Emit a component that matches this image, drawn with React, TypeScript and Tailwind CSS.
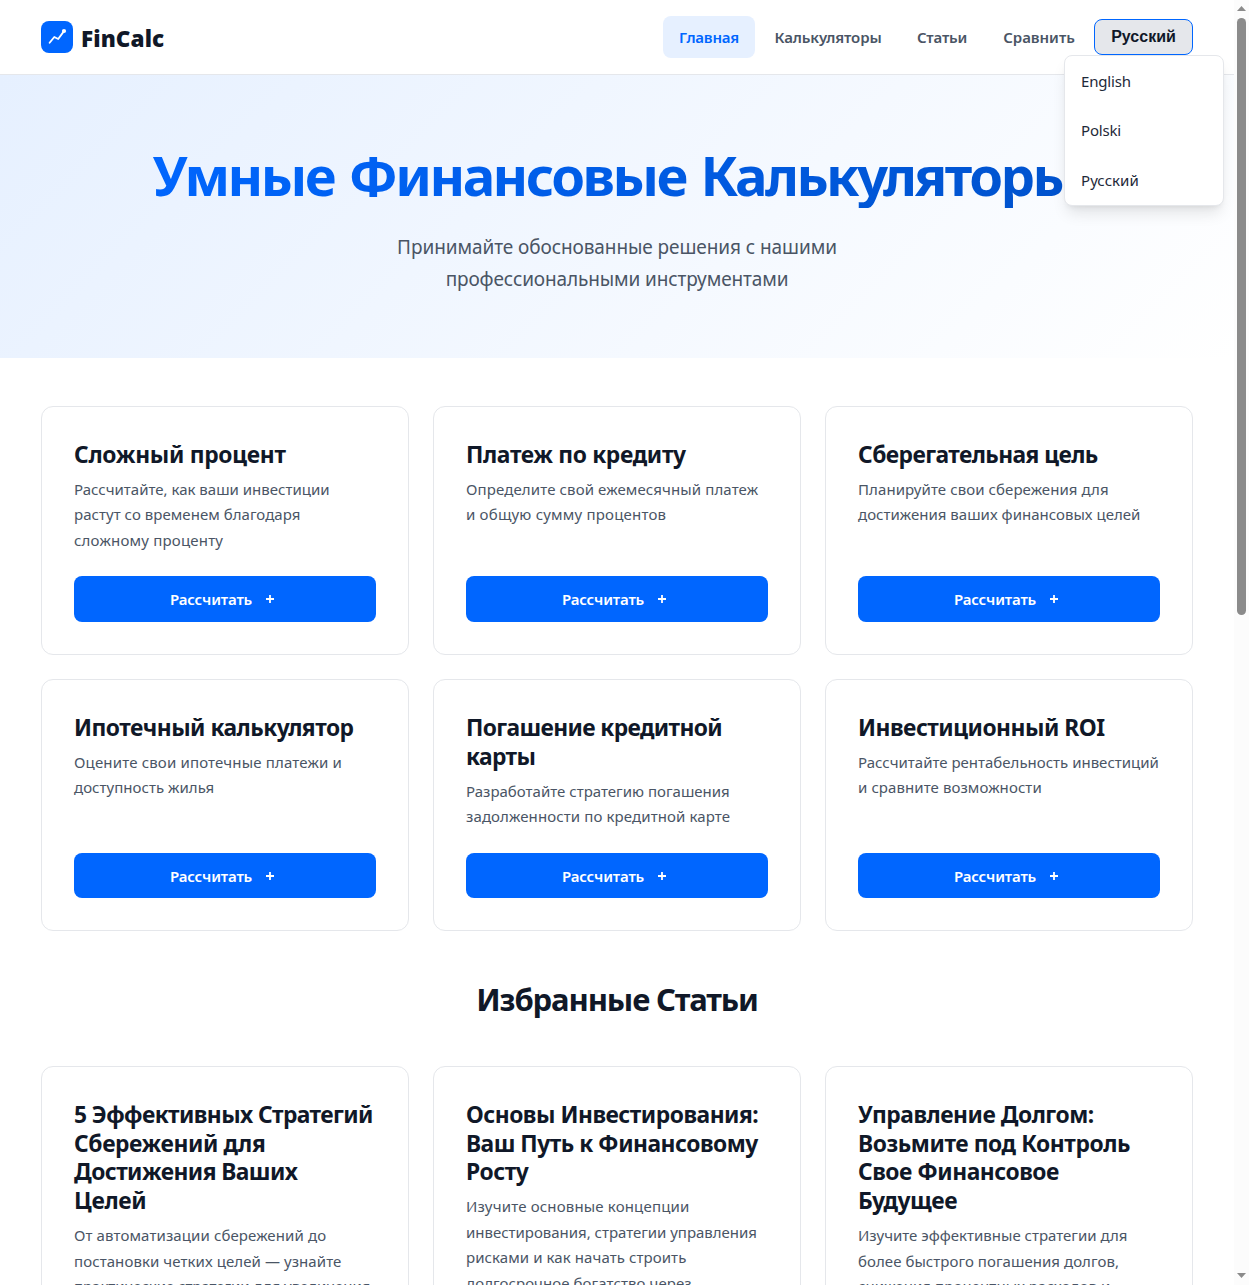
type Line = [text: string, tracking?: string];

interface CardData {
  title: Line[];
  text: Line[];
}

const calculators: CardData[] = [
  {
    title: [["Сложный процент", "tracking-[-0.3px]"]],
    text: [
      ["Рассчитайте, как ваши инвестиции", "tracking-[0px]"],
      ["растут со временем благодаря", "tracking-[0.04px]"],
      ["сложному проценту", "tracking-[0.2px]"],
    ],
  },
  {
    title: [["Платеж по кредиту", "tracking-[-0.35px]"]],
    text: [
      ["Определите свой ежемесячный платеж", "tracking-[0.12px]"],
      ["и общую сумму процентов", "tracking-[0.2px]"],
    ],
  },
  {
    title: [["Сберегательная цель", "tracking-[-0.57px]"]],
    text: [
      ["Планируйте свои сбережения для", "tracking-[0.08px]"],
      ["достижения ваших финансовых целей", "tracking-[0.02px]"],
    ],
  },
  {
    title: [["Ипотечный калькулятор", "tracking-[-0.5px]"]],
    text: [
      ["Оцените свои ипотечные платежи и", "tracking-[0.16px]"],
      ["доступность жилья", "tracking-[0.03px]"],
    ],
  },
  {
    title: [
      ["Погашение кредитной", "tracking-[-0.63px]"],
      ["карты", "tracking-[-0.6px]"],
    ],
    text: [
      ["Разработайте стратегию погашения", "tracking-[0.01px]"],
      ["задолженности по кредитной карте", "tracking-[0.11px]"],
    ],
  },
  {
    title: [["Инвестиционный ROI", "tracking-[-0.5px]"]],
    text: [["Рассчитайте рентабельность инвестиций", "tracking-[0px]"], ["и сравните возможности"]],
  },
];

const articles: CardData[] = [
  {
    title: [
      ["5 Эффективных Стратегий", "tracking-[-0.59px]"],
      ["Сбережений для", "tracking-[-0.4px]"],
      ["Достижения Ваших", "tracking-[-0.55px]"],
      ["Целей", "tracking-[-0.3px]"],
    ],
    text: [
      ["От автоматизации сбережений до", "tracking-[0.11px]"],
      ["постановки четких целей — узнайте"],
      ["практические стратегии для увеличения", "tracking-[-0.05px]"],
      ["ваших накоплений"],
    ],
  },
  {
    title: [
      ["Основы Инвестирования:"],
      ["Ваш Путь к Финансовому", "tracking-[-0.5px]"],
      ["Росту"],
    ],
    text: [
      ["Изучите основные концепции", "tracking-[0.17px]"],
      ["инвестирования, стратегии управления", "tracking-[-0.02px]"],
      ["рисками и как начать строить"],
      ["долгосрочное богатство через"],
      ["инвестиции"],
    ],
  },
  {
    title: [
      ["Управление Долгом:"],
      ["Возьмите под Контроль", "tracking-[-0.42px]"],
      ["Свое Финансовое"],
      ["Будущее"],
    ],
    text: [
      ["Изучите эффективные стратегии для", "tracking-[0px]"],
      ["более быстрого погашения долгов,", "tracking-[0.05px]"],
      ["снижения процентных расходов и"],
      ["достижения свободы"],
    ],
  },
];

function Lines({ lines, fallback }: { lines: Line[]; fallback: string }) {
  return (
    <>
      {lines.map(([t, tracking]) => (
        <span key={t} className={`block whitespace-nowrap ${tracking ?? fallback}`}>
          {t}
        </span>
      ))}
    </>
  );
}

function Card({ data, action }: { data: CardData; action?: boolean }) {
  return (
    <article className="flex flex-col rounded-xl border border-gray-200 bg-white p-8">
      <h3 className="mb-[7.1px] pt-[1.9px] text-[22.8px] leading-[28.8px] font-bold text-gray-900">
        <Lines lines={data.title} fallback="tracking-[-0.48px]" />
      </h3>
      <p className="mb-[23.15px] grow text-[15px] leading-[25.5px] text-gray-600">
        <Lines lines={data.text} fallback="tracking-[0.08px]" />
      </p>
      {action && (
        <button className="flex h-[45.5px] w-full items-center justify-center rounded-lg bg-[#0066ff] pt-px pr-[6px] text-[15px] font-semibold text-white">
          <span className="tracking-[-0.18px]">Рассчитать</span>
          <svg className="mb-[0.4px] ml-3.5" width="8" height="8" viewBox="0 0 8 8" fill="none" stroke="currentColor" strokeWidth="1.8">
            <path d="M4 0v8M0 4h8" />
          </svg>
        </button>
      )}
    </article>
  );
}

function Scrollbar() {
  return (
    <div className="flex h-full w-[15px] shrink-0 flex-col items-center bg-[#fcfcfc]">
      <svg className="mt-1.5 shrink-0" width="9" height="5" viewBox="0 0 9 5" fill="#8b8b8b">
        <path d="M4.5 0 9 5H0z" />
      </svg>
      <div className="mt-[7px] h-[597px] w-[9px] shrink-0 rounded-full bg-[#8b8b8b]" />
      <svg className="mt-auto mb-[7px] shrink-0" width="9" height="5" viewBox="0 0 9 5" fill="#8b8b8b">
        <path d="M4.5 5 9 0H0z" />
      </svg>
    </div>
  );
}

export default function App() {
  return (
    <div className="flex h-[1285px] w-[1249px] overflow-hidden bg-white font-['Noto_Sans','Open_Sans',sans-serif] text-gray-900">
      <div className="h-full w-[1234px] overflow-hidden">
        <header className="h-[75px] border-b border-gray-200 bg-white">
          <div className="mx-auto flex h-[74px] max-w-[1200px] items-center justify-between px-6">
            <a className="flex items-center gap-2">
              <svg width="32" height="32" viewBox="0 0 32 32" fill="none">
                <rect width="32" height="32" rx="8" fill="#0066ff" />
                <path d="M8.6 21.8 13.3 16l3.9 2L22.8 10.4" stroke="#fff" strokeWidth="1.8" strokeLinecap="round" strokeLinejoin="round" />
                <circle cx="23" cy="10" r="2.1" fill="#fff" />
              </svg>
              <span className="pt-[3px] text-[22.5px] leading-8 font-black tracking-[0.1px]">FinCalc</span>
            </a>
            <nav className="flex items-center gap-1 text-[15px] font-semibold whitespace-nowrap text-gray-600">
              <a className="flex h-[42px] w-[92px] items-center justify-center rounded-lg bg-[#e6f0ff] tracking-[-0.2px] text-[#0066ff]">
                Главная
              </a>
              <a className="w-[138px] text-center tracking-[-0.12px]">Калькуляторы</a>
              <a className="w-[82px] text-center tracking-[-0.2px]">Статьи</a>
              <a className="w-[104px] text-center tracking-[-0.04px]">Сравнить</a>
              <div className="relative -ml-px">
                <button className="flex h-9 w-[99px] items-center justify-center rounded-lg border border-[#0066ff] bg-gray-200 font-['Liberation_Sans',sans-serif] text-base font-bold text-gray-900">
                  Русский
                </button>
                <div className="absolute top-9 -left-[30px] z-10 h-[151px] w-40 rounded-lg border border-gray-200 bg-white text-[15px] font-normal text-gray-800 shadow-lg">
                  <div className="flex h-[50px] items-center px-4 tracking-[-0.18px]">English</div>
                  <div className="flex h-[49px] items-center px-4 tracking-[-0.18px]">Polski</div>
                  <div className="flex h-[50px] items-center px-4 tracking-[0.05px]">Русский</div>
                </div>
              </div>
            </nav>
          </div>
        </header>

        <section className="flex h-[283px] flex-col items-center bg-linear-135 from-[#e6f0ff] to-white pt-[67px] text-center">
          <h1 className="mr-[5px] bg-linear-135 from-[#0066ff] to-[#0052cc] bg-clip-text text-[54.5px] leading-[66px] font-bold tracking-[-2.55px] whitespace-nowrap text-transparent [word-spacing:3px]">
            Умные Финансовые Калькуляторы
          </h1>
          <p className="mt-[23px] text-[19px] leading-8 text-gray-600">
            <span className="block tracking-[-0.08px]">Принимайте обоснованные решения с нашими</span>
            <span className="block tracking-[-0.12px]">профессиональными инструментами</span>
          </p>
        </section>

        <main className="mx-auto w-[1200px] px-6">
          <div className="grid grid-cols-3 gap-6 pt-12">
            {calculators.map((c) => (
              <Card key={c.title[0][0]} data={c} action />
            ))}
          </div>
          <h2 className="mt-12 text-center text-[31px] leading-[41px] font-bold tracking-[-1.15px]">Избранные Статьи</h2>
          <div className="mt-[45.7px] grid grid-cols-3 gap-6">
            {articles.map((a) => (
              <Card key={a.title[0][0]} data={a} />
            ))}
          </div>
        </main>
      </div>
      <Scrollbar />
    </div>
  );
}
